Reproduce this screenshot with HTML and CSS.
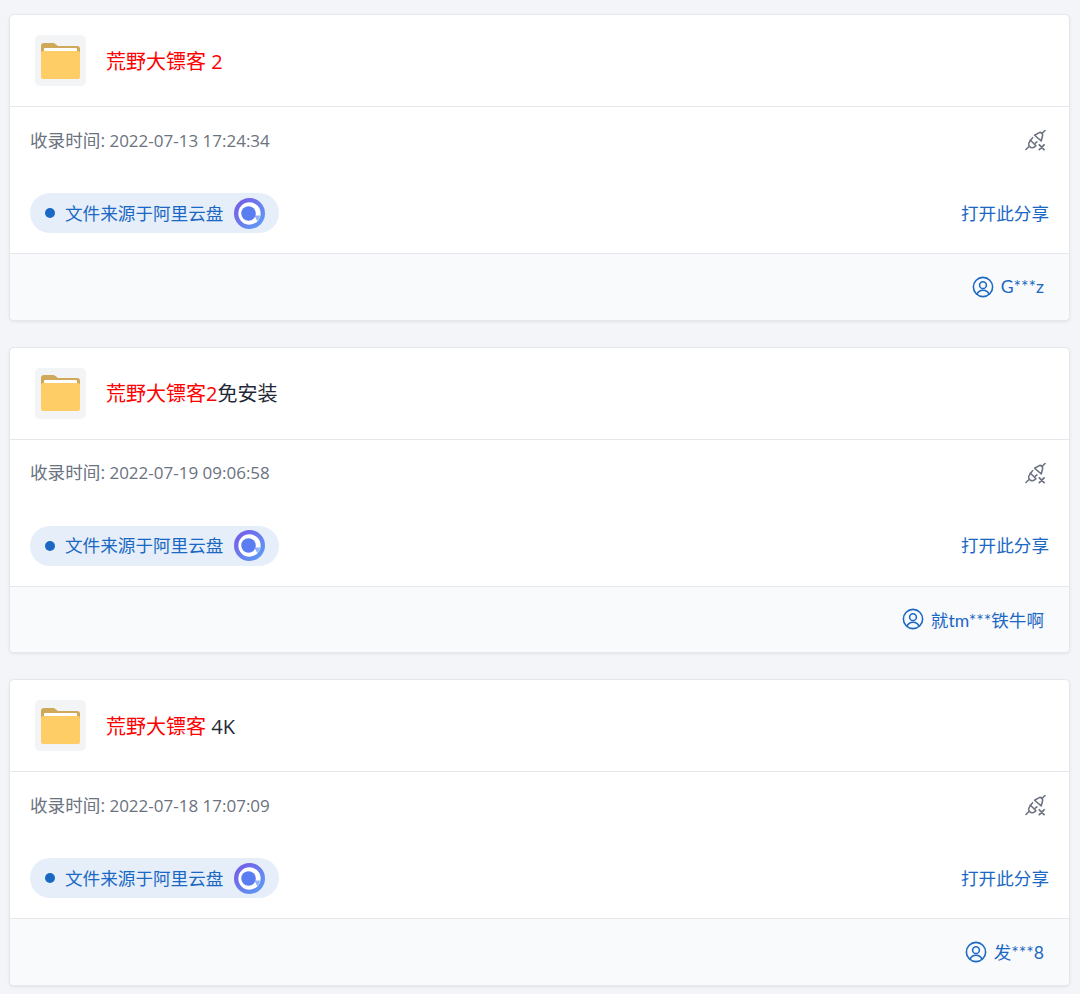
FILE: index.html
```html
<!DOCTYPE html>
<html>
<head>
    <meta name="viewport" content="width=device-width, initial-scale=1.0">
    <link rel="stylesheet" href="styles.css">
</head>
<body>
    <svg class="icon-defs" width="0" height="0">
        <defs>
            <linearGradient id="ali" x1="0" y1="0" x2="1" y2="1">
                <stop offset="0" stop-color="#7a55e6"/>
                <stop offset="1" stop-color="#5aa2f6"/>
            </linearGradient>
            <symbol id="folder" viewBox="0 0 39 36">
                <path d="M0 3a3 3 0 0 1 3-3h10l4 3h19a3 3 0 0 1 3 3v12H0z" fill="#cfa85a"/>
                <rect x="3" y="5" width="33" height="6" rx="1" fill="#fff"/>
                <path d="M0 10a2 2 0 0 1 2-2h35a2 2 0 0 1 2 2v24a2 2 0 0 1-2 2H2a2 2 0 0 1-2-2z" fill="#ffcd66"/>
            </symbol>
            <symbol id="unplug" viewBox="0 0 22 22" fill="none" stroke="#6b7280" stroke-width="1.6" stroke-linecap="round" stroke-linejoin="round">
                <path d="M1 21l3-3"/>
                <path d="M5.500 11l6 6-1.500 1.200a3.500 3.500 0 0 1-5-.2 3.500 3.500 0 0 1-.2-5z"/>
                <path d="M8 8.500l-1.500 2M12.500 13l-2 1.500"/>
                <path d="M21 1l-3 3"/>
                <path d="M10 6l7 6 1.500-6a3 3 0 0 0-3-3z"/>
                <path d="M15 16l5 5M20 16l-5 5" stroke-width="1.800"/>
            </symbol>
            <symbol id="user" viewBox="0 0 24 24" fill="none" stroke="#1a68c4" stroke-width="1.700" stroke-linecap="round">
                <circle cx="12" cy="12" r="10.500"/>
                <circle cx="12" cy="10" r="3.700"/>
                <path d="M5.500 20c1-3 3.500-4.500 6.500-4.500s5.500 1.500 6.500 4.500"/>
            </symbol>
            <symbol id="aliyun" viewBox="0 0 32 32">
                <circle cx="16" cy="16" r="16" fill="url(#ali)"/>
                <circle cx="16" cy="16" r="11.500" fill="#fff"/>
                <path d="M24 24a11.500 11.500 0 0 0 3-6l-6 0z" fill="#8fb4f8"/>
                <circle cx="15" cy="16" r="7.500" fill="#5b7df2"/>
            </symbol>
        </defs>
    </svg>

    <div class="list">
        <div class="card">
            <div class="card-head">
                <div class="folder-box"><svg class="folder"><use href="#folder"/></svg></div>
                <div class="title"><span class="hl">荒野大镖客 2</span></div>
            </div>
            <div class="card-body">
                <div class="row row-time">
                    <span class="time"><span class="time-label">收录时间:</span> 2022-07-13 17:24:34</span>
                    <svg class="unplug"><use href="#unplug"/></svg>
                </div>
                <div class="row row-source">
                    <span class="source"><i class="dot"></i><span class="source-text">文件来源于阿里云盘</span><svg class="aliyun"><use href="#aliyun"/></svg></span>
                    <a class="open">打开此分享</a>
                </div>
            </div>
            <div class="card-foot">
                <svg class="user"><use href="#user"/></svg>
                <span>G***z</span>
            </div>
        </div>

        <div class="card">
            <div class="card-head">
                <div class="folder-box"><svg class="folder"><use href="#folder"/></svg></div>
                <div class="title"><span class="hl">荒野大镖客2</span>免安装</div>
            </div>
            <div class="card-body">
                <div class="row row-time">
                    <span class="time"><span class="time-label">收录时间:</span> 2022-07-19 09:06:58</span>
                    <svg class="unplug"><use href="#unplug"/></svg>
                </div>
                <div class="row row-source">
                    <span class="source"><i class="dot"></i><span class="source-text">文件来源于阿里云盘</span><svg class="aliyun"><use href="#aliyun"/></svg></span>
                    <a class="open">打开此分享</a>
                </div>
            </div>
            <div class="card-foot">
                <svg class="user"><use href="#user"/></svg>
                <span>就tm***铁牛啊</span>
            </div>
        </div>

        <div class="card">
            <div class="card-head">
                <div class="folder-box"><svg class="folder"><use href="#folder"/></svg></div>
                <div class="title"><span class="hl">荒野大镖客</span> 4K</div>
            </div>
            <div class="card-body">
                <div class="row row-time">
                    <span class="time"><span class="time-label">收录时间:</span> 2022-07-18 17:07:09</span>
                    <svg class="unplug"><use href="#unplug"/></svg>
                </div>
                <div class="row row-source">
                    <span class="source"><i class="dot"></i><span class="source-text">文件来源于阿里云盘</span><svg class="aliyun"><use href="#aliyun"/></svg></span>
                    <a class="open">打开此分享</a>
                </div>
            </div>
            <div class="card-foot">
                <svg class="user"><use href="#user"/></svg>
                <span>发***8</span>
            </div>
        </div>
    </div>
</body>
</html>
```

FILE: styles.css
```css
* {
    box-sizing: border-box;
    margin: 0;
    padding: 0;
}

html, body {
    height: 994px;
    overflow: hidden;
}

body {
    font-family: "Open Sans", "Noto Sans CJK SC", sans-serif;
    font-size: 16px;
    background-color: #f3f5f9;
    color: #1f2937;
    padding: 14px 10px 0 9px;
}

.icon-defs {
    position: absolute;
}

.list {
    display: flex;
    flex-direction: column;
    gap: 26px;
}

.card {
    height: 306.500px;
    display: flex;
    flex-direction: column;
    background-color: #fff;
    border: 1px solid #e5e7eb;
    border-radius: 5px;
    box-shadow: 0 1px 3px rgba(0,0,0,0.08);
    overflow: hidden;
}

.card-head {
    height: 92px;
    flex: none;
    display: flex;
    align-items: center;
    gap: 20px;
    padding: 0 25px;
    border-bottom: 1px solid #e5e7eb;
}

.folder-box {
    width: 51px;
    height: 51px;
    display: flex;
    align-items: center;
    justify-content: center;
    background-color: #f3f4f6;
    border-radius: 5px;
}

.folder {
    width: 39px;
    height: 36px;
}

.title {
    font-size: 20px;
    line-height: 28px;
    padding-top: 2px;
}

.hl {
    color: #ff0000;
}

.card-body {
    height: 147px;
    flex: none;
    padding: 0 20px;
    border-bottom: 1px solid #e5e7eb;
}

.row {
    display: flex;
    align-items: center;
    justify-content: space-between;
}

.row-time {
    height: 66px;
}

.time {
    color: #6b7280;
    font-size: 17px;
    margin-bottom: 2px;
}

.time-label {
    font-size: 17.600px;
}

.unplug {
    width: 21px;
    height: 22px;
    margin-right: 3px;
}

.row-source {
    margin-top: 20px;
}

.source {
    height: 40px;
    width: 249px;
    display: flex;
    align-items: center;
    padding-left: 15px;
    border-radius: 20px;
    background-color: #e6eff9;
    color: #1a68c4;
    font-size: 17.600px;
}

.source-text {
    margin-bottom: 2px;
}

.dot {
    width: 10px;
    height: 10px;
    margin-right: 10px;
    border-radius: 50%;
    background-color: #1a68c4;
}

.aliyun {
    width: 31px;
    height: 31px;
    margin-left: 11px;
}

.open {
    color: #1a68c4;
    font-size: 17.600px;
    margin-bottom: 2px;
}

.card-foot {
    flex: 1;
    display: flex;
    align-items: center;
    justify-content: flex-end;
    gap: 7px;
    padding-right: 25px;
    background-color: #f9fafc;
    color: #1a68c4;
    font-family: Lato, "Noto Sans CJK SC", sans-serif;
    font-size: 17.600px;
}

.user {
    width: 22px;
    height: 22px;
}
```
